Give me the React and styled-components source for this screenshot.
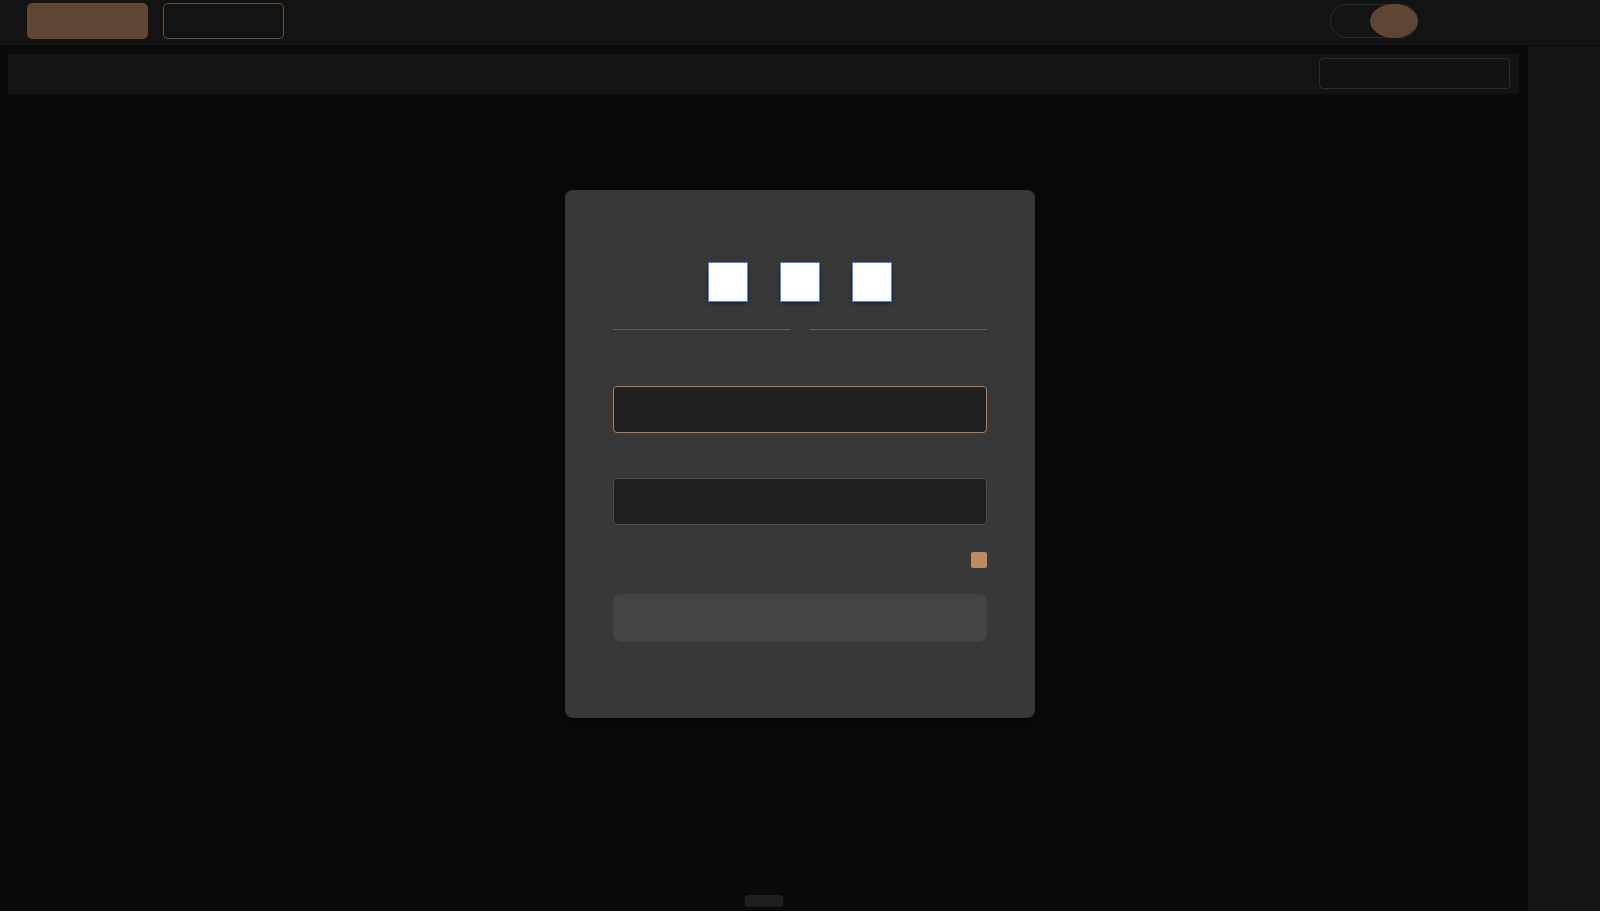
import styled, { createGlobalStyle } from "styled-components";

const Global = createGlobalStyle`
  html, body {
    margin: 0;
    padding: 0;
    background: #ffffff;
    font-family: "Inter", "Liberation Sans", sans-serif;
  }
  * { box-sizing: border-box; }
`;

const Page = styled.div`
  height: 911px;
  display: flex;
  flex-direction: column;
  background: #0a0a0a;
`;

const TopBar = styled.header`
  height: 46px;
  flex-shrink: 0;
  display: flex;
  align-items: flex-start;
  padding: 3px 182px 0 27px;
  background: #131313;
  border-bottom: 1px solid #090909;
`;

const NavGroup = styled.div`
  display: flex;
  gap: 15px;
  flex: 1;
`;

const NavButton = styled.button`
  width: 121px;
  height: 36px;
  border-radius: 5px;
  border: 1px solid ${(p) => (p.$primary ? "#5f4634" : "#6a4d37")};
  background: ${(p) => (p.$primary ? "#5f4634" : "transparent")};
  cursor: pointer;
`;

const Toggle = styled.div`
  margin-top: 1px;
  width: 88px;
  height: 34px;
  border-radius: 17px;
  border: 1px solid #2b2b2b;
  display: flex;
  justify-content: flex-end;
`;

const Knob = styled.span`
  width: 48px;
  height: 34px;
  margin: -1px -1px 0 0;
  border-radius: 50%;
  background: #5f4634;
`;

const Body = styled.div`
  flex: 1;
  display: flex;
  min-height: 0;
`;

const Main = styled.main`
  flex: 1;
  display: flex;
  flex-direction: column;
  padding: 8px 9px 4px 8px;
`;

const SubBar = styled.div`
  height: 40px;
  display: flex;
  justify-content: flex-end;
  padding: 4px 9px 0 0;
  background: #131313;
`;

const SearchBox = styled.input`
  width: 191px;
  height: 31px;
  border: 1px solid #2b2b2b;
  border-radius: 4px;
  background: #111111;
  outline: none;
`;

const Stage = styled.div`
  flex: 1;
  display: flex;
  justify-content: center;
  align-items: flex-start;
  padding: 96px 0 0 73px;
`;

const Card = styled.form`
  width: 470px;
  height: 528px;
  background: #383838;
  border-radius: 8px;
  box-shadow: 0 6px 20px rgba(0, 0, 0, 0.5);
  padding: 72px 48px 0;
  display: flex;
  flex-direction: column;
`;

const Providers = styled.div`
  display: flex;
  justify-content: center;
  gap: 32px;
`;

const ProviderBox = styled.div`
  width: 40px;
  height: 40px;
  background: #ffffff;
  border: 1.5px solid #4a86ee;
  box-shadow: 0 2px 4px rgba(0, 0, 0, 0.35);
`;

const Divider = styled.div`
  margin-top: 27px;
  display: flex;
  gap: 20px;
`;

const Line = styled.span`
  flex: 1;
  height: 1px;
  background: #5e5e5e;
`;

const Field = styled.input`
  height: 47px;
  width: 100%;
  margin-top: ${(p) => p.$gap}px;
  border: 1px solid ${(p) => (p.$focused ? "#b47d52" : "#4a4a4a")};
  border-radius: 4px;
  background: #212121;
  outline: none;
`;

const CheckRow = styled.div`
  margin-top: 27px;
  display: flex;
  justify-content: flex-end;
`;

const Check = styled.span`
  width: 16px;
  height: 16px;
  border-radius: 2px;
  background: #bd8a62;
`;

const Submit = styled.button`
  margin-top: 26px;
  height: 48px;
  border: none;
  border-radius: 8px;
  background: #444444;
`;

const Footer = styled.div`
  display: flex;
  justify-content: center;
`;

const Handle = styled.span`
  width: 38px;
  height: 12px;
  border-radius: 3px;
  background: #1e1e1e;
`;

const Sidebar = styled.aside`
  width: 72px;
  background: #141414;
`;

export default function App() {
  return (
    <>
      <Global />
      <Page>
        <TopBar>
          <NavGroup>
            <NavButton $primary />
            <NavButton />
          </NavGroup>
          <Toggle>
            <Knob />
          </Toggle>
        </TopBar>
        <Body>
          <Main>
            <SubBar>
              <SearchBox />
            </SubBar>
            <Stage>
              <Card onSubmit={(e) => e.preventDefault()}>
                <Providers>
                  <ProviderBox />
                  <ProviderBox />
                  <ProviderBox />
                </Providers>
                <Divider>
                  <Line />
                  <Line />
                </Divider>
                <Field $gap={56} $focused />
                <Field $gap={45} type="password" />
                <CheckRow>
                  <Check />
                </CheckRow>
                <Submit type="submit" />
              </Card>
            </Stage>
            <Footer>
              <Handle />
            </Footer>
          </Main>
          <Sidebar />
        </Body>
      </Page>
    </>
  );
}
